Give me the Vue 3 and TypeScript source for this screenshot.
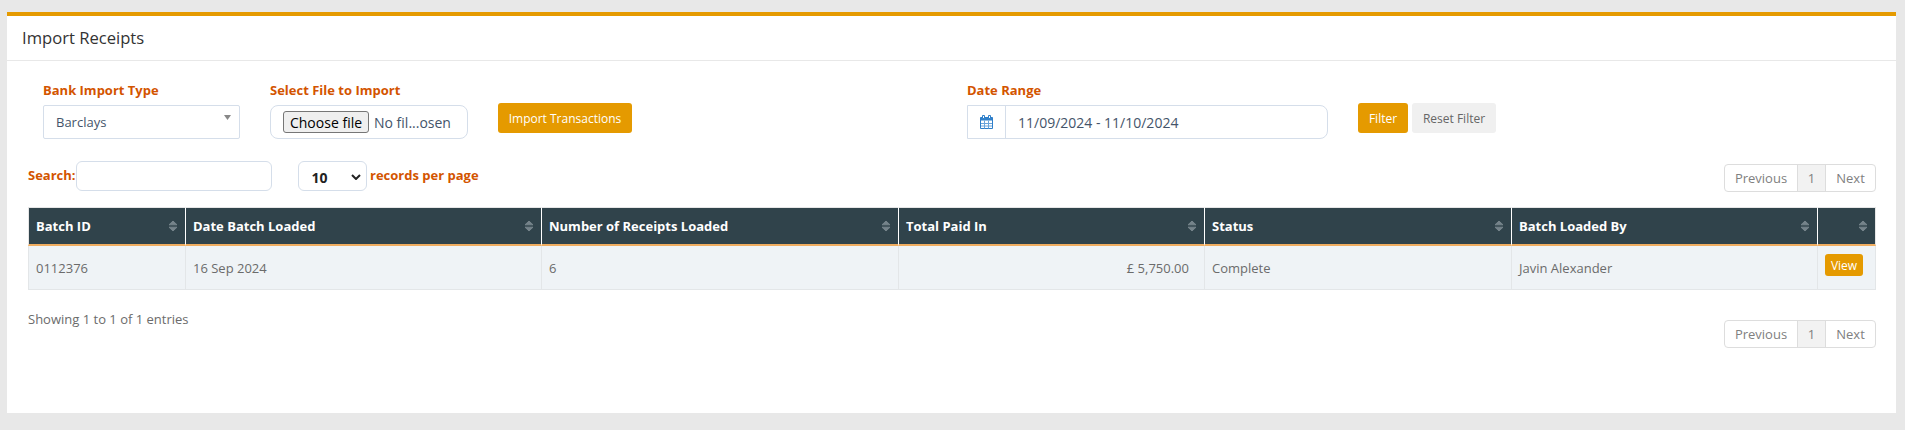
<script setup lang="ts">
interface Col { label: string; width: number }
const cols: Col[] = [
  { label: 'Batch ID', width: 158 },
  { label: 'Date Batch Loaded', width: 356 },
  { label: 'Number of Receipts Loaded', width: 357 },
  { label: 'Total Paid In', width: 306 },
  { label: 'Status', width: 307 },
  { label: 'Batch Loaded By', width: 306 },
  { label: '', width: 58 },
]
const pages = ['Previous', '1', 'Next']
</script>

<template>
  <div class="page">
    <section class="card">
      <header class="card-head">Import Receipts</header>
      <div class="card-body">
        <div class="form-row">
          <div class="field field-bank">
            <label class="lbl">Bank Import Type</label>
            <div class="control select-box">
              <span>Barclays</span>
              <svg class="tri" width="7" height="5" viewBox="0 0 7 5"><path d="M0 0h7L3.500 5z" fill="#888" /></svg>
            </div>
          </div>
          <div class="field field-file">
            <label class="lbl">Select File to Import</label>
            <div class="control file-box">
              <button type="button" class="file-btn">Choose file</button>
              <span class="file-name">No fil...osen</span>
            </div>
          </div>
          <button type="button" class="btn btn-primary btn-import">Import Transactions</button>
          <div class="field field-date">
            <label class="lbl">Date Range</label>
            <div class="control date-box">
              <span class="addon">
                <svg width="13" height="14" viewBox="0 0 13 14">
                  <path d="M0.500 2.500h12v11h-12z" fill="#fff" stroke="#2f7fc9" />
                  <path d="M0.500 2.500h12V5.500h-12z" fill="#2f7fc9" />
                  <path d="M4.500 5.500v8M8.500 5.500v8M1 8.500h11M1 11h11" stroke="#6aa4db" stroke-width="1" fill="none" />
                  <path d="M2.500 0.500h2v3h-2zM8.500 0.500h2v3h-2z" fill="#fff" stroke="#2f7fc9" stroke-width="1" />
                </svg>
              </span>
              <span class="date-text">11/09/2024 - 11/10/2024</span>
            </div>
          </div>
          <button type="button" class="btn btn-primary btn-filter">Filter</button>
          <button type="button" class="btn btn-reset">Reset Filter</button>
        </div>

        <div class="toolbar">
          <label class="search-lbl"><span class="lbl raised">Search:</span><input class="search-input" type="text" /></label>
          <div class="length">
            <div class="length-box">
              <span>10</span>
              <svg width="10" height="6" viewBox="0 0 10 6"><path d="M1 1l4 4 4-4" fill="none" stroke="#222" stroke-width="2" /></svg>
            </div>
            <span class="lbl raised">records per page</span>
          </div>
          <ul class="pager">
            <li v-for="p in pages" :key="p" :class="{ current: p === '1', prev: p === 'Previous' }">{{ p }}</li>
          </ul>
        </div>

        <table class="grid">
          <colgroup>
            <col v-for="c in cols" :key="c.label" :style="{ width: c.width + 'px' }" />
          </colgroup>
          <thead>
            <tr>
              <th v-for="c in cols" :key="c.label">
                <div class="th-in">
                  <span>{{ c.label }}</span>
                  <svg class="sort" width="10" height="12" viewBox="0 0 10 12">
                    <path d="M5 1 9 4.800H1z" fill="#75838a" stroke="#75838a" stroke-linejoin="round" />
                    <path d="M5 11 1 7.200h8z" fill="#75838a" stroke="#75838a" stroke-linejoin="round" />
                  </svg>
                </div>
              </th>
            </tr>
          </thead>
          <tbody>
            <tr>
              <td>0112376</td>
              <td>16 Sep 2024</td>
              <td>6</td>
              <td class="num">£ 5,750.00</td>
              <td>Complete</td>
              <td>Javin Alexander</td>
              <td class="act"><button type="button" class="btn btn-primary btn-view">View</button></td>
            </tr>
          </tbody>
        </table>

        <div class="foot">
          <div class="info">Showing 1 to 1 of 1 entries</div>
          <ul class="pager pager-foot">
            <li v-for="p in pages" :key="p" :class="{ current: p === '1', prev: p === 'Previous' }">{{ p }}</li>
          </ul>
        </div>
      </div>
    </section>
  </div>
</template>

<style>
html, body { margin: 0; background: #e8e8e8; }
</style>

<style scoped>
.page {
  padding: 12px 9px 17px 7px;
  font-family: "Open Sans", "Liberation Sans", sans-serif;
  font-size: 13px;
  color: #6b6b6b;
}
.card { background: #fff; border-top: 4px solid #e59a00; }
.card-head {
  height: 44px;
  line-height: 44px;
  padding-left: 15px;
  font-size: 16.600px;
  color: #333;
  border-bottom: 1px solid #e8e8e8;
}
.card-body { padding: 0 20px 65px 21px; }
.form-row { display: flex; align-items: flex-start; padding: 19px 0 0 15px; }
.lbl { font-weight: 700; font-size: 13px; line-height: 20px; color: #d35400; display: block; }
.raised { padding-bottom: 3px; }
.field-bank { width: 197px; }
.field-file { width: 198px; margin-left: 30px; }
.field-date { width: 361px; margin-left: 335px; }
.control {
  box-sizing: border-box;
  height: 34px;
  margin-top: 5px;
  border: 1px solid #d5deea;
  display: flex;
  align-items: center;
}
.select-box { padding: 0 0 0 12px; position: relative; border-radius: 2px; color: #44546a; }
.tri { position: absolute; right: 8px; top: 9px; }
.file-box { border-radius: 8px; padding-left: 12px; font-size: 14px; color: #44546a; }
.file-btn {
  box-sizing: border-box;
  width: 86px;
  height: 22px;
  padding: 0;
  background: #efefef;
  border: 1px solid #767676;
  border-radius: 3px;
  font: 14px "Open Sans", sans-serif;
  color: #000;
}
.file-name { margin-left: 5px; white-space: nowrap; }
.date-box { border-radius: 0 8px 8px 0; }
.addon {
  box-sizing: border-box;
  width: 38px;
  height: 100%;
  display: flex;
  align-items: center;
  justify-content: center;
  border-right: 1px solid #d5deea;
  flex: none;
}
.date-text { padding-left: 12px; font-size: 14px; color: #44546a; }
.btn {
  box-sizing: border-box;
  border: 0;
  border-radius: 3px;
  padding: 0;
  font-family: inherit;
  font-size: 12px;
}
.btn-primary { background: #e59a00; color: #fff; }
.btn-import { width: 134px; height: 30px; margin: 23px 0 0 30px; }
.btn-filter { width: 50px; height: 30px; margin: 23px 0 0 30px; }
.btn-reset { width: 84px; height: 30px; margin: 23px 0 0 4px; background: #f0f0f0; color: #666; }
.toolbar { display: flex; align-items: flex-start; height: 46px; margin-top: 22px; }
.search-lbl { display: flex; align-items: center; height: 30px; }
.search-input {
  box-sizing: border-box;
  width: 196px;
  height: 30px;
  margin-left: 0;
  border: 1px solid #d5deea;
  border-radius: 6px;
  outline: 0;
  background: #fff;
}
.length { display: flex; align-items: center; height: 30px; margin-left: 26px; }
.length-box {
  box-sizing: border-box;
  width: 69px;
  height: 30px;
  padding: 2px 5px 0 13px;
  border: 1px solid #d5deea;
  border-radius: 6px;
  display: flex;
  align-items: center;
  justify-content: space-between;
  font-size: 14px;
  font-weight: 700;
  color: #222;
}
.length .lbl { margin-left: 3.500px; }
.pager {
  list-style: none;
  display: flex;
  margin: 3px 0 0 auto;
  padding: 0;
  box-sizing: border-box;
  width: 152px;
  height: 28px;
  border: 1px solid #ddd;
  border-radius: 4px;
  line-height: 26px;
  color: #808080;
}
.pager li { box-sizing: border-box; flex: 1; text-align: center; }
.pager .prev { flex: none; width: 72px; }
.pager .current { flex: none; width: 29px; background: #f2f2f2; border-left: 1px solid #ddd; border-right: 1px solid #ddd; }
.grid { width: 1848px; table-layout: fixed; border-collapse: separate; border-spacing: 0; }
.grid th {
  box-sizing: border-box;
  height: 39px;
  padding: 0 7px;
  background: #30434b;
  color: #fff;
  font-size: 13px;
  font-weight: 700;
  text-align: left;
  border-top: 1px solid #e6e6e6;
  border-bottom: 2px solid #f0ad60;
  border-right: 1px solid #fff;
}
.grid th:first-child { border-left: 1px solid #e6e6e6; }
.grid th:last-child { border-right-color: #e6e6e6; }
.th-in { display: flex; align-items: center; justify-content: space-between; height: 36px; }
.sort { flex: none; }
.grid td {
  box-sizing: border-box;
  height: 44px;
  padding: 0 7px;
  background: #eff3f6;
  border-right: 1px solid #e3e6e8;
  border-bottom: 1px solid #e3e6e8;
  color: #6b6b6b;
}
.grid td:first-child { border-left: 1px solid #e3e6e8; }
.grid td.num { text-align: right; padding-right: 15px; }
.grid td.act { vertical-align: top; padding-top: 8px; }
.btn-view { display: block; width: 38px; height: 22px; }
.foot { display: flex; align-items: flex-start; }
.info { margin-top: 19px; line-height: 20px; }
.pager-foot { margin-top: 30px; }
</style>
